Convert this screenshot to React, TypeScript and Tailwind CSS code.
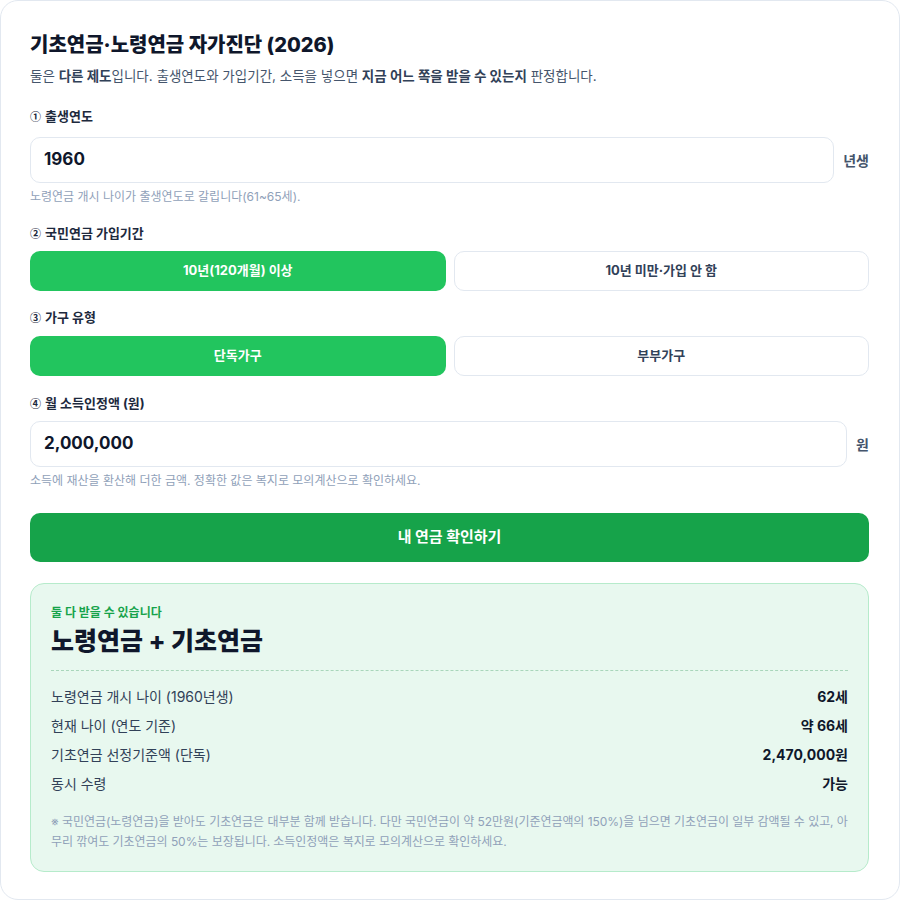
import { useState } from 'react'

const FONT = 'font-[Inter,"Noto_Sans_CJK_KR",sans-serif]'

const FieldLabel = ({ num, children }: { num: string; children: React.ReactNode }) => {
  return (
    <div className="flex items-center gap-[4px] text-[13px] leading-[20px] font-bold text-slate-800">
      <span className='font-["Noto_Sans_CJK_KR"] text-[11px] font-bold'>{num}</span>
      <span>{children}</span>
    </div>
  )
}

const Hint = ({ children }: { children: React.ReactNode }) => {
  return <div className="mt-[5px] text-[12px] leading-[18px] text-slate-400">{children}</div>
}

const Choice = ({
  options,
  value,
  onChange,
  gap
}: {
  options: string[]
  value: string
  onChange: (v: string) => void
  gap: string
}) => {
  return (
    <div className={`${gap} grid grid-cols-2 gap-[8px]`}>
      {options.map((o) => (
        <button
          key={o}
          onClick={() => onChange(o)}
          className={
            o === value
              ? 'h-[40px] rounded-[10px] bg-[#22c55e] text-[13px] font-bold text-white'
              : 'h-[40px] rounded-[10px] border border-slate-200 bg-white text-[13px] font-bold text-slate-700'
          }
        >
          {o}
        </button>
      ))}
    </div>
  )
}

const ResultRow = ({ label, value }: { label: string; value: string }) => {
  return (
    <div className="flex items-center justify-between text-[14px] leading-[20px]">
      <span className="text-slate-700">{label}</span>
      <span className="font-bold text-slate-900">{value}</span>
    </div>
  )
}

export default function App() {
  const [period, setPeriod] = useState('10년(120개월) 이상')
  const [household, setHousehold] = useState('단독가구')

  return (
    <div className={`${FONT} min-h-screen bg-white`}>
      <div className="w-[900px] rounded-[18px] border border-slate-200 bg-white pl-[29px] pr-[30px] pt-[30px] pb-[27px]">
        <h1 className="text-[20px] leading-[28px] font-extrabold text-slate-900">
          기초연금·노령연금 자가진단 (2026)
        </h1>
        <p className="mt-[7px] text-[13.5px] leading-[20px] text-slate-600">
          둘은 <b className="text-slate-700">다른 제도</b>입니다. 출생연도와 가입기간, 소득을 넣으면{' '}
          <b className="text-slate-700">지금 어느 쪽을 받을 수 있는지</b> 판정합니다.
        </p>

        <div className="mt-[20px]">
          <FieldLabel num="①">출생연도</FieldLabel>
          <div className="mt-[11px] flex items-center gap-[9px]">
            <div className="flex h-[46px] flex-1 items-center rounded-[10px] border border-slate-200 px-[13px] text-[17px] font-bold text-slate-900">
              1960
            </div>
            <span className="text-[14px] font-bold text-slate-600">년생</span>
          </div>
          <Hint>노령연금 개시 나이가 출생연도로 갈립니다(61~65세).</Hint>
        </div>

        <div className="mt-[17px]">
          <FieldLabel num="②">국민연금 가입기간</FieldLabel>
          <Choice
            gap="mt-[8px]"
            options={['10년(120개월) 이상', '10년 미만·가입 안 함']}
            value={period}
            onChange={setPeriod}
          />
        </div>

        <div className="mt-[16px]">
          <FieldLabel num="③">가구 유형</FieldLabel>
          <Choice gap="mt-[9px]" options={['단독가구', '부부가구']} value={household} onChange={setHousehold} />
        </div>

        <div className="mt-[17px]">
          <FieldLabel num="④">월 소득인정액 (원)</FieldLabel>
          <div className="mt-[8px] flex items-center gap-[9px]">
            <div className="flex h-[46px] flex-1 items-center rounded-[10px] border border-slate-200 px-[13px] text-[17px] font-bold text-slate-900">
              2,000,000
            </div>
            <span className="text-[14px] font-bold text-slate-600">원</span>
          </div>
          <Hint>소득에 재산을 환산해 더한 금액. 정확한 값은 복지로 모의계산으로 확인하세요.</Hint>
        </div>

        <button className="mt-[23px] h-[49px] w-full rounded-[10px] bg-[#16a34a] text-[15px] font-bold text-white">
          내 연금 확인하기
        </button>

        <div className="mt-[21px] rounded-[14px] border border-[#b6ebcb] bg-[#e8f8ef] px-[20px] pt-[21px] pb-[19px]">
          <div className="text-[12px] leading-[16px] font-bold text-[#16a34a]">둘 다 받을 수 있습니다</div>
          <div className="mt-[4px] border-b border-dashed border-[#a9d6bb] pb-[13px] text-[25px] leading-[32px] font-extrabold text-slate-900">
            노령연금 + 기초연금
          </div>
          <div className="mt-[16px] flex flex-col gap-[9px]">
            <ResultRow label="노령연금 개시 나이 (1960년생)" value="62세" />
            <ResultRow label="현재 나이 (연도 기준)" value="약 66세" />
            <ResultRow label="기초연금 선정기준액 (단독)" value="2,470,000원" />
            <ResultRow label="동시 수령" value="가능" />
          </div>
          <p className="mt-[18px] text-[12px] leading-[20px] tracking-[-0.05px] text-slate-400">
            ※ 국민연금(노령연금)을 받아도 기초연금은 대부분 함께 받습니다. 다만 국민연금이 약 52만원(기준연금액의 150%)을 넘으면 기초연금이 일부 감액될 수 있고, 아무리 깎여도 기초연금의 50%는 보장됩니다. 소득인정액은 복지로 모의계산으로 확인하세요.
          </p>
        </div>
      </div>
    </div>
  )
}
